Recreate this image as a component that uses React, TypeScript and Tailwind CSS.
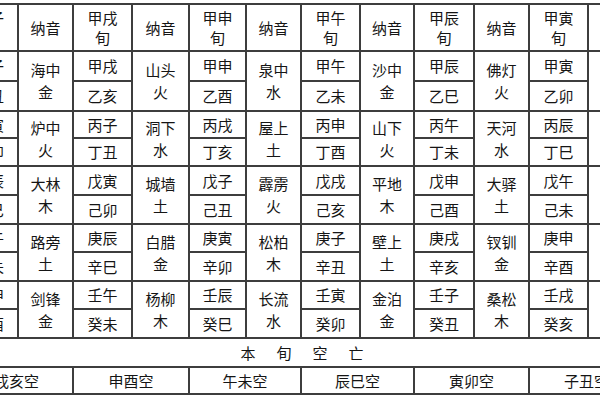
import React from 'react';

type Xun = {
  head: string;
  pairs: [string, string][];
  nayin: string[];
};

const xuns: Xun[] = [
  {
    head: '甲子',
    pairs: [['甲子', '乙丑'], ['丙寅', '丁卯'], ['戊辰', '己巳'], ['庚午', '辛未'], ['壬申', '癸酉']],
    nayin: ['海中金', '炉中火', '大林木', '路旁土', '剑锋金'],
  },
  {
    head: '甲戌',
    pairs: [['甲戌', '乙亥'], ['丙子', '丁丑'], ['戊寅', '己卯'], ['庚辰', '辛巳'], ['壬午', '癸未']],
    nayin: ['山头火', '洞下水', '城墙土', '白腊金', '杨柳木'],
  },
  {
    head: '甲申',
    pairs: [['甲申', '乙酉'], ['丙戌', '丁亥'], ['戊子', '己丑'], ['庚寅', '辛卯'], ['壬辰', '癸巳']],
    nayin: ['泉中水', '屋上土', '霹雳火', '松柏木', '长流水'],
  },
  {
    head: '甲午',
    pairs: [['甲午', '乙未'], ['丙申', '丁酉'], ['戊戌', '己亥'], ['庚子', '辛丑'], ['壬寅', '癸卯']],
    nayin: ['沙中金', '山下火', '平地木', '壁上土', '金泊金'],
  },
  {
    head: '甲辰',
    pairs: [['甲辰', '乙巳'], ['丙午', '丁未'], ['戊申', '己酉'], ['庚戌', '辛亥'], ['壬子', '癸丑']],
    nayin: ['佛灯火', '天河水', '大驿土', '钗钏金', '桑松木'],
  },
  {
    head: '甲寅',
    pairs: [['甲寅', '乙卯'], ['丙辰', '丁巳'], ['戊午', '己未'], ['庚申', '辛酉'], ['壬戌', '癸亥']],
    nayin: ['大溪水', '沙中土', '天上火', '石榴木', '大海水'],
  },
];

const kong = ['戌亥空', '申酉空', '午未空', '辰巳空', '寅卯空', '子丑空'];

// widths per column: [xun, nayin] x 6
const widths = [58, 55, 59, 57, 57, 55, 59, 54, 60, 55, 59, 56];

// sub row heights (top, bottom) per group
const rowH: [string, string][] = [
  ['h-[30px]', 'h-[30px]'],
  ['h-[27px]', 'h-[28px]'],
  ['h-[29px]', 'h-[29px]'],
  ['h-[28px]', 'h-[29px]'],
  ['h-[28px]', 'h-[29px]'],
];

const cell = 'border-2 border-[#3d3d3d] text-center align-middle p-0';

export default function App() {
  return (
    <div
      className="w-[600px] h-[400px] overflow-hidden bg-white text-[#151515]"
      style={{ fontFamily: '"Noto Sans CJK SC", "Noto Sans", sans-serif' }}
    >
      <div className="pt-[3px]">
        <table className="ml-[-41px] table-fixed border-collapse text-[15px] leading-[20px]" style={{ width: 684 }}>
          <colgroup>
            {widths.map((w, i) => (
              <col key={i} style={{ width: w }} />
            ))}
          </colgroup>
          <tbody>
            <tr className="h-[47px]">
              {xuns.map((x) => (
                <React.Fragment key={x.head}>
                  <td className={cell}>
                    {x.head}
                    <br />旬
                  </td>
                  <td className={cell}>纳音</td>
                </React.Fragment>
              ))}
            </tr>
            {rowH.map((h, g) => (
              <React.Fragment key={g}>
                <tr className={h[0]}>
                  {xuns.map((x) => (
                    <React.Fragment key={x.head}>
                      <td className={cell}>{x.pairs[g][0]}</td>
                      <td className={`${cell} leading-[22px]`} rowSpan={2}>
                        {x.nayin[g].slice(0, 2)}
                        <br />
                        {x.nayin[g].slice(2)}
                      </td>
                    </React.Fragment>
                  ))}
                </tr>
                <tr className={h[1]}>
                  {xuns.map((x) => (
                    <td key={x.head} className={cell}>
                      {x.pairs[g][1]}
                    </td>
                  ))}
                </tr>
              </React.Fragment>
            ))}
            <tr className="h-[29px]">
              <td colSpan={12} className="border-2 border-[#3d3d3d] border-x-0 p-0 text-center align-middle">
                <span className="pl-[21px] tracking-[21px]">本旬空亡</span>
              </td>
            </tr>
            <tr className="h-[27px]">
              {kong.map((k) => (
                <td key={k} colSpan={2} className={cell}>
                  {k}
                </td>
              ))}
            </tr>
          </tbody>
        </table>
      </div>
    </div>
  );
}
